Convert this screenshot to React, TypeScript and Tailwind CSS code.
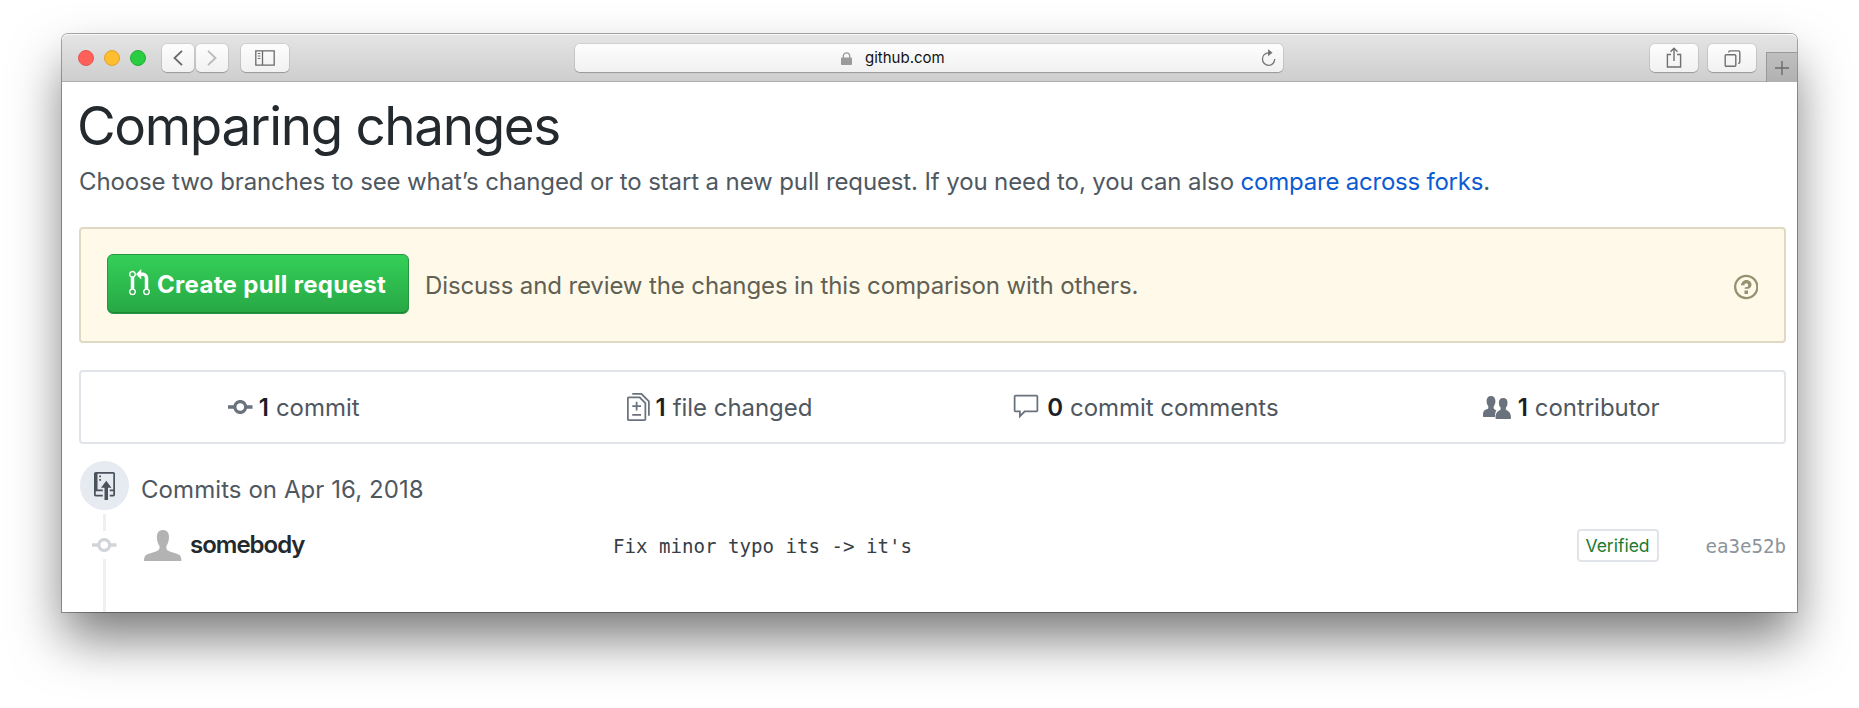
import type { ReactNode } from "react";

type IconProps = { d: string; box: string; className: string };

function Glyph({ d, box, className }: IconProps) {
  return (
    <svg viewBox={box} className={`shrink-0 ${className}`} fill="currentColor" fillRule="evenodd" aria-hidden="true">
      <path d={d} />
    </svg>
  );
}

const PULL_REQUEST =
  "M11 11.28V5c-.03-.78-.34-1.47-.94-2.06C9.46 2.35 8.78 2.03 8 2H7V0L4 3l3 3V4h1c.27.02.48.11.69.31.21.2.3.42.31.69v6.28A1.993 1.993 0 0 0 10 15a1.993 1.993 0 0 0 1-3.72zm-1 2.92c-.66 0-1.2-.55-1.2-1.2 0-.65.55-1.2 1.2-1.2.65 0 1.2.55 1.2 1.2 0 .65-.55 1.2-1.2 1.2zM4 3c0-1.11-.89-2-2-2a1.993 1.993 0 0 0-1 3.72v6.56A1.993 1.993 0 0 0 2 15a1.993 1.993 0 0 0 1-3.72V4.72c.59-.34 1-.98 1-1.72zm-.8 10c0 .66-.55 1.2-1.2 1.2-.65 0-1.2-.55-1.2-1.2 0-.65.55-1.2 1.2-1.2.65 0 1.2.55 1.2 1.2zM2 4.2C1.34 4.2.8 3.65.8 3c0-.65.55-1.2 1.2-1.2.65 0 1.2.55 1.2 1.2 0 .65-.55 1.2-1.2 1.2z";
const COMMIT =
  "M10.86 7c-.45-1.72-2-3-3.86-3-1.86 0-3.41 1.28-3.86 3H0v2h3.14c.45 1.72 2 3 3.86 3 1.86 0 3.41-1.28 3.86-3H14V7h-3.14zM7 10.2c-1.22 0-2.2-.98-2.2-2.2 0-1.22.98-2.2 2.2-2.2 1.22 0 2.2.98 2.2 2.2 0 1.22-.98 2.2-2.2 2.2z";
const COMMENT =
  "M14 1H2c-.55 0-1 .45-1 1v8c0 .55.45 1 1 1h2v3.5L7.5 11H14c.55 0 1-.45 1-1V2c0-.55-.45-1-1-1zm0 9H7l-2 2v-2H2V2h12v8z";
const QUESTION =
  "M6 10h2v2H6v-2zm4-3.5C10 8.64 8 9 8 9H6c0-.55.45-1 1-1h.5c.28 0 .5-.22.5-.5v-1c0-.28-.22-.5-.5-.5h-1c-.28 0-.5.22-.5.5V7H4c0-1.5 1.5-3 3-3s3 1 3 2.5zM7 2.3c3.14 0 5.7 2.56 5.7 5.7s-2.56 5.7-5.7 5.7A5.71 5.71 0 0 1 1.3 8c0-3.14 2.56-5.7 5.7-5.7zM7 1C3.14 1 0 4.14 0 8s3.14 7 7 7 7-3.14 7-7-3.14-7-7-7z";
const DIFF =
  "M6 7h2v1H6v2H5V8H3V7h2V5h1v2zm-3 6h5v-1H3v1zM7.5 2L11 5.5V15c0 .55-.45 1-1 1H1c-.55 0-1-.45-1-1V3c0-.55.45-1 1-1h6.5zM10 6L7 3H1v12h9V6zM8.5 0H3v1h5l4 4v8h1V4.5L8.5 0z";
const REPO_PUSH =
  "M4 3H3V2h1v1zM3 5h1V4H3v1zm4 0L4 9h2v7h2V9h2L7 5zm4-5H1C.45 0 0 .45 0 1v12c0 .55.45 1 1 1h4v-1H1v-2h4v-1H2V1h9.02L11 10H9v1h2v2H9v1h2c.55 0 1-.45 1-1V1c0-.55-.45-1-1-1z";
const PEOPLE =
  "M8 0c3 0 4.400 2 4.400 5 0 2.500-.7 4-1.700 5.200v2.200c.4.800 1.700 1.200 2.700 1.800-.9 1.200-1.300 2.900-1.400 6.800H1c-.7 0-1-.3-1-1 0-5.200 1.300-5.500 3-6.400 1-.5 2-.8 2.300-1.400v-2C4.300 9 3.600 7.500 3.600 5c0-3 1.400-5 4.400-5zM20.200 2c3 0 4.300 2 4.300 4.700 0 2.300-.7 3.800-1.600 4.900v2c.4 1.200 5.100 1.200 5.100 8.200 0 .8-.4 1.200-1.200 1.200H13.600c-.8 0-1.100-.4-1.100-1.200 0-7 4.600-7 5.100-8.200v-2c-1-1.100-1.700-2.600-1.700-4.900C15.900 4 17.300 2 20.200 2z";
const AVATAR =
  "M19 0c4.200 0 6.200 3 6 7.500-.2 4-1.300 6.500-2.600 8.500-.5 2.500.2 4 2.300 5 4.500 2 9.300 2.300 11.300 4.500 1 1.200 1.300 3 1.500 5.500H0c0-2.500.4-4.300 1.500-5.500 2-2.200 7-2.500 11.500-4.500 2.200-1 2.900-2.500 2.500-5-1.400-2-2.400-4.500-2.600-8.500C12.700 3 14.800 0 19 0z";

function ToolButton({ className, children }: { className: string; children: ReactNode }) {
  return (
    <button
      className={`flex h-[28px] items-center justify-center rounded-[5px] bg-linear-to-b from-[#fdfdfd] to-[#f1f1f1] text-[#6a6a6a] shadow-[0_0_0_1px_rgba(0,0,0,0.07),0_1px_1px_rgba(0,0,0,0.22)] ${className}`}
    >
      {children}
    </button>
  );
}

function Toolbar() {
  return (
    <header className="flex h-[48px] items-start rounded-t-[6px] border-b border-[#aeaeae] bg-linear-to-b from-[#e5e5e5] to-[#cecece] pt-[10px] shadow-[inset_0_1px_0_#f7f7f7]">
      <div className="ml-[16px] mt-[6px] flex gap-[10px]">
        <span className="size-[16px] rounded-full border border-[#e2574f] bg-[#ff6059]" />
        <span className="size-[16px] rounded-full border border-[#e0a32c] bg-[#ffbe2f]" />
        <span className="size-[16px] rounded-full border border-[#22ae37] bg-[#29cd42]" />
      </div>
      <ToolButton className="ml-[16px] w-[32px]">
        <svg viewBox="0 0 10 16" className="h-[16px] w-[10px]" fill="none" stroke="#686868" strokeWidth="1.8" aria-hidden="true">
          <path d="M9 .8 1.500 8 9 15.200" />
        </svg>
      </ToolButton>
      <ToolButton className="ml-[2px] w-[32px]">
        <svg viewBox="0 0 10 16" className="h-[16px] w-[10px]" fill="none" stroke="#b9b9b9" strokeWidth="1.8" aria-hidden="true">
          <path d="M1 .8 8.500 8 1 15.200" />
        </svg>
      </ToolButton>
      <ToolButton className="ml-[13px] w-[48px]">
        <svg viewBox="0 0 20 16" className="h-[16px] w-[20px]" fill="none" stroke="#6a6a6a" strokeWidth="1.3" aria-hidden="true">
          <path d="M.8.8h18.400v14.400H.8zM7.500.8v14.400" />
          <path d="M2.800 3.500h2.600M2.800 6h2.600M2.800 8.500h2.600" strokeWidth="1" />
        </svg>
      </ToolButton>
      <div className="ml-[286px] flex h-[28px] w-[708px] items-center rounded-[5px] bg-linear-to-b from-[#fdfdfd] to-[#f1f1f1] pl-[266px] pr-[7px] shadow-[0_0_0_1px_rgba(0,0,0,0.07),0_1px_1px_rgba(0,0,0,0.22)]">
        <svg viewBox="0 0 11 13" className="h-[13px] w-[11px]" aria-hidden="true">
          <rect x="0" y="5.500" width="11" height="7.500" rx=".8" fill="#9b9b9b" />
          <path d="M2.300 6V4a3.200 3.200 0 0 1 6.400 0v2" fill="none" stroke="#9b9b9b" strokeWidth="1.300" />
        </svg>
        <span className="ml-[13px] text-[15px] leading-[28px] text-[#111]">github.com</span>
        <svg viewBox="0 0 16 20" className="ml-auto h-[18px] w-[15px]" fill="none" stroke="#737373" strokeWidth="1.4" aria-hidden="true">
          <path d="M8.500 4.200H8a6.800 7 0 1 0 6.900 7" />
          <path d="M7.500.3v7.700l5-3.900z" fill="#737373" stroke="none" />
        </svg>
      </div>
      <ToolButton className="ml-auto w-[48px]">
        <svg viewBox="0 0 16 24" className="-mt-[2px] h-[24px] w-[16px]" fill="none" stroke="#707070" strokeWidth="1.4" aria-hidden="true">
          <path d="M5 9.500H1.400V22h13.200V9.500H11M8 16V3.200M4.500 6.700 8 3.200l3.500 3.500" />
        </svg>
      </ToolButton>
      <ToolButton className="ml-[10px] w-[48px]">
        <svg viewBox="0 0 17 17" className="h-[17px] w-[17px]" fill="none" stroke="#707070" strokeWidth="1.4" aria-hidden="true">
          <rect x="1.200" y="4.800" width="10.600" height="11.400" rx="1" />
          <path d="M4.800 2.600V1.900c0-.6.300-1 1-1h8.600c.9 0 1.400.5 1.400 1.300V12c0 .8-.4 1.200-1.200 1.200h-.4" />
        </svg>
      </ToolButton>
      <div className="-mb-px ml-[10px] mt-[8px] flex h-[30px] w-[31px] items-center justify-center border-l border-t border-[#999] bg-linear-to-b from-[#bfbfbf] to-[#b1b1b1]">
        <svg viewBox="0 0 14 14" className="size-[14px]" stroke="#6b6b6b" strokeWidth="1.4" aria-hidden="true">
          <path d="M7 0v14M0 7h14" />
        </svg>
      </div>
    </header>
  );
}

function Stat({ icon, count, label }: { icon: ReactNode; count: string; label: string }) {
  return (
    <li className="flex flex-1 items-center justify-center text-[24px] leading-[36px]">
      {icon}
      <strong className="mr-[8px] pt-[2px] font-semibold text-[#1b1f23]">{count}</strong>
      <span className="-ml-px pt-[2px] tracking-[-0.05px] text-[#50585f]">{label}</span>
    </li>
  );
}

export default function App() {
  return (
    <div className="h-[708px] w-[1859px] overflow-hidden bg-white pl-[62px] pt-[34px] font-['Inter','Liberation_Sans',sans-serif]">
      <div className="flex h-[578px] w-[1735px] flex-col rounded-t-[6px] bg-white shadow-[0_0_0_1px_rgba(0,0,0,0.33),0_28px_52px_-2px_rgba(0,0,0,0.53)]">
        <Toolbar />
        <main className="flex flex-1 flex-col pl-[17px] pr-[11px]">
          <h1 className="-ml-[2px] mt-[8px] text-[53px] leading-[72px] tracking-[-1.36px] text-[#24292e]">Comparing changes</h1>
          <p className="whitespace-nowrap pt-px text-[24px] leading-[38px] tracking-[-0.12px] text-[#50585f]">
            Choose two branches to see what’s changed or to start a new pull request. If you need to, you can also{" "}
            <a className="tracking-[-0.22px] text-[#0b5bd3]">compare across forks</a>.
          </p>

          <section className="mt-[26px] flex h-[116px] items-center rounded-[4px] border-2 border-[#dfd8c2] bg-[#fff9ea] pl-[26px] pr-[26px]">
            <button className="-mt-[2px] flex h-[60px] w-[302px] items-center rounded-[6px] border border-[#279643] bg-linear-to-b from-[#34d058] to-[#28a745] pl-[21px] text-white shadow-[inset_0_-1px_0_rgba(0,80,20,0.35)]">
              <Glyph d={PULL_REQUEST} box="0 0 12 16" className="-mt-[3px] h-[28px] w-[21px]" />
              <span className="ml-[7px] whitespace-nowrap pt-px text-[24px] font-bold leading-[36px] tracking-[0.33px]">Create pull request</span>
            </button>
            <p className="ml-[16px] mt-[2px] text-[24px] leading-[36px] tracking-[-0.12px] text-[#606053]">
              Discuss and review the changes in this comparison with others.
            </p>
            <Glyph d={QUESTION} box="0 0 14 16" className="ml-auto mt-[4px] h-[28px] w-[24.500px] text-[#959270]" />
          </section>

          <ul className="mt-[27px] flex h-[74px] items-center rounded-[4px] border-2 border-[#e1e4e8]">
            <Stat icon={<Glyph d={COMMIT} box="0 0 14 16" className="mr-[6px] h-[28px] w-[24.500px] text-[#6a737d]" />} count="1" label="commit" />
            <Stat icon={<Glyph d={DIFF} box="0 0 13 16" className="mr-[6px] h-[28px] w-[22.750px] text-[#6a737d]" />} count="1" label="file changed" />
            <Stat icon={<Glyph d={COMMENT} box="0 0 16 16" className="mr-[7px] size-[28px] text-[#6a737d]" />} count="0" label="commit comments" />
            <Stat icon={<Glyph d={PEOPLE} box="0 0 28 23" className="mr-[7px] h-[23px] w-[28px] text-[#6a737d]" />} count="1" label="contributor" />
          </ul>

          <section className="flex flex-1">
            <div className="ml-[1px] flex w-[49px] flex-col items-center pt-[17px]">
              <span className="flex size-[49px] shrink-0 items-center justify-center rounded-full bg-[#e6ebf1] text-[#4a525c]">
                <Glyph d={REPO_PUSH} box="0 0 12 16" className="h-[28px] w-[21px]" />
              </span>
              <span className="mt-[4px] h-[17px] w-[3.500px] shrink-0 bg-[#edeff2]" />
              <Glyph d={COMMIT} box="0 0 14 16" className="h-[28px] w-[24.500px] text-[#d1d5da]" />
              <span className="w-[3.500px] flex-1 bg-[#edeff2]" />
            </div>
            <div className="flex-1">
              <h2 className="ml-[12px] mt-[28px] text-[24px] leading-[36px] tracking-[0.07px] text-[#50585f]">Commits on Apr 16, 2018</h2>
              <div className="mt-[20px] flex h-[34px] items-center">
                <Glyph d={AVATAR} box="0 0 37.500 31" className="ml-[15px] h-[31px] w-[37.500px] text-[#b3b3b3]" />
                <strong className="ml-[8.500px] w-[423px] text-[24px] font-semibold leading-[32px] tracking-[-1px] text-[#24292e]">somebody</strong>
                <code className="mt-[4px] whitespace-pre font-['DejaVu_Sans_Mono',monospace] text-[19.100px] leading-[32px] text-[#363e46]">{"Fix minor typo its -> it's"}</code>
                <span className="ml-auto flex h-[33px] w-[82px] items-center justify-center rounded-[4px] border-2 border-[#e1e4e8] pt-px text-[17.500px] leading-[24px] text-[#1a7a32]">Verified</span>
                <code className="ml-[47px] mt-[4px] font-['DejaVu_Sans_Mono',monospace] text-[19.100px] leading-[32px] text-[#8b949c]">ea3e52b</code>
              </div>
            </div>
          </section>
        </main>
      </div>
    </div>
  );
}
